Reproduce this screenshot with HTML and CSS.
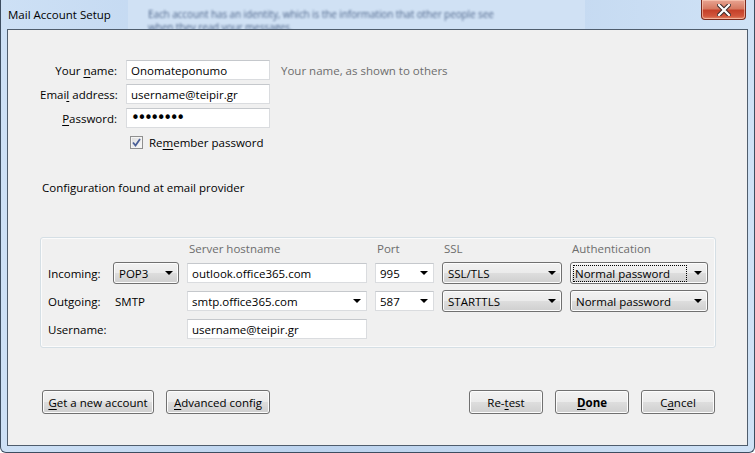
FILE: index.html
```html
<!DOCTYPE html>
<html lang="en">
<head>
    <meta charset="UTF-8">
    <title>Mail Account Setup</title>
    <link rel="stylesheet" href="styles.css">
</head>
<body>
    <div class="window">
        <div class="glass">
            <div class="glass-text">Each account has an identity, which is the information that other people see<br>when they read your messages.</div>
        </div>
        <div class="titlebar">
            <span class="title">Mail Account Setup</span>
            <div class="close-btn">
                <svg width="14" height="12" viewBox="0 0 14 12">
                    <path d="M2 1 L12 11 M12 1 L2 11" stroke="#3a2a2a" stroke-width="4.2" stroke-linecap="square"/>
                    <path d="M2 1 L12 11 M12 1 L2 11" stroke="#ffffff" stroke-width="2.2" stroke-linecap="square"/>
                </svg>
            </div>
        </div>

        <div class="client">
            <div class="identity">
                <span class="lbl">Your <u>n</u>ame:</span>
                <input class="text" type="text" value="Onomateponumo">
                <span class="hint">Your name, as shown to others</span>

                <span class="lbl">Emai<u>l</u> address:</span>
                <input class="text" type="text" value="username@teipir.gr">
                <span></span>

                <span class="lbl"><u>P</u>assword:</span>
                <input class="text pass" type="password" value="12345678">
                <span></span>

                <span></span>
                <div class="check-row">
                    <span class="checkbox">
                        <svg width="9" height="9" viewBox="0 0 9 9">
                            <path d="M1 4.5 L3.5 7.5 L8 1" fill="none" stroke="#4a5f97" stroke-width="1.8"/>
                        </svg>
                    </span>
                    <span>Re<u>m</u>ember password</span>
                </div>
                <span></span>
            </div>

            <p class="status">Configuration found at email provider</p>

            <div class="servers">
                <span></span>
                <span></span>
                <span class="col-head">Server hostname</span>
                <span class="col-head">Port</span>
                <span class="col-head">SSL</span>
                <span class="col-head">Authentication</span>

                <span class="row-lbl">Incoming:</span>
                <div class="dropdown"><span>POP3</span><span class="arrow"></span></div>
                <input class="text" type="text" value="outlook.office365.com">
                <div class="combo"><span>995</span><span class="arrow"></span></div>
                <div class="dropdown"><span>SSL/TLS</span><span class="arrow"></span></div>
                <div class="dropdown"><span class="focused">Normal password</span><span class="arrow"></span></div>

                <span class="row-lbl">Outgoing:</span>
                <span class="row-lbl smtp">SMTP</span>
                <div class="combo"><span>smtp.office365.com</span><span class="arrow"></span></div>
                <div class="combo"><span>587</span><span class="arrow"></span></div>
                <div class="dropdown"><span>STARTTLS</span><span class="arrow"></span></div>
                <div class="dropdown"><span>Normal password</span><span class="arrow"></span></div>

                <span class="row-lbl">Username:</span>
                <span></span>
                <input class="text" type="text" value="username@teipir.gr">
            </div>

            <div class="actions">
                <div class="btn-group">
                    <button class="btn wide"><u>G</u>et a new account</button>
                    <button class="btn mid"><u>A</u>dvanced config</button>
                </div>
                <div class="btn-group">
                    <button class="btn">Re-<u>t</u>est</button>
                    <button class="btn default"><u>D</u>one</button>
                    <button class="btn">C<u>a</u>ncel</button>
                </div>
            </div>
        </div>
    </div>
</body>
</html>
```

FILE: styles.css
```css
body {
    margin: 0;
    width: 755px;
    height: 453px;
    overflow: hidden;
    font-family: "Open Sans", "Noto Sans", sans-serif;
    font-size: 11.5px;
    color: #000;
}

u {
    text-decoration: underline;
    text-underline-offset: 2px;
}

.window {
    position: relative;
    box-sizing: border-box;
    width: 755px;
    height: 453px;
    display: flex;
    flex-direction: column;
    background: linear-gradient(90deg, #cde0f5 0%, #bcd3ee 40%, #c3d8f0 70%, #cfe2f6 100%);
    border: 1px solid #3d4d60;
    border-top: none;
    border-radius: 0 0 6px 6px;
}

/* blurred window behind the aero glass */
.glass {
    position: absolute;
    left: 127px;
    top: 0;
    width: 457px;
    height: 29px;
    background: #d0e1f4;
    overflow: hidden;
}

.glass-text {
    position: absolute;
    left: 20px;
    top: 8px;
    font-size: 10px;
    line-height: 13px;
    letter-spacing: -0.1px;
    color: #1e3864;
    white-space: nowrap;
    filter: blur(1.2px);
    opacity: 0.75;
}

.titlebar {
    position: relative;
    height: 29px;
    display: flex;
    justify-content: space-between;
    align-items: flex-start;
    padding: 0 8px 0 7px;
}

.title {
    align-self: center;
    line-height: 16px;
    margin-top: 1px;
}

.close-btn {
    width: 45px;
    height: 20px;
    box-sizing: border-box;
    display: flex;
    align-items: center;
    justify-content: center;
    border: 1px solid #7a2a1d;
    border-top: none;
    border-radius: 0 0 4px 4px;
    background: linear-gradient(#e8a492 0%, #d67a62 45%, #c5412a 55%, #d2563c 85%, #e28a6c 100%);
    box-shadow: inset 0 0 0 1px rgba(255, 210, 190, 0.6);
}

.client {
    position: relative;
    flex: 1;
    margin: 0 6px 6px 6px;
    border: 1px solid #4f5d6d;
    background: #f0f0f0;
    padding: 30px 31px 0 32px;
    display: flex;
    flex-direction: column;
}

.identity {
    display: grid;
    grid-template-columns: 77px 144px 1fr;
    grid-auto-rows: 20px;
    column-gap: 9px;
    row-gap: 4px;
    align-items: center;
}

.lbl {
    text-align: right;
    white-space: nowrap;
}

.hint {
    color: #6d6d6d;
    padding-left: 2px;
    white-space: nowrap;
}

.text {
    box-sizing: border-box;
    height: 20px;
    width: 100%;
    margin: 0;
    padding: 0 4px;
    border: 1px solid #dadcdf;
    border-top-color: #c5c8cc;
    border-radius: 0;
    background: #fff;
    font-family: inherit;
    font-size: 11.5px;
    color: #000;
    outline: none;
}

.pass {
    font-family: "DejaVu Sans", sans-serif;
    font-size: 15px;
    letter-spacing: -2.4px;
}

.check-row {
    display: flex;
    align-items: center;
    gap: 6px;
    margin-left: 4px;
    white-space: nowrap;
}

.checkbox {
    box-sizing: border-box;
    width: 13px;
    height: 13px;
    display: flex;
    align-items: center;
    justify-content: center;
    border: 1px solid #8f8f8f;
    background: linear-gradient(135deg, #dcdcdc, #fafafa);
    box-shadow: inset 0 0 0 1px #f4f4f4;
}

.status {
    margin: 28px 0 0 2px;
    line-height: 16px;
}

.servers {
    margin-top: 41px;
    display: grid;
    grid-template-columns: 57px 66px 180px 59px 120px 138px;
    grid-template-rows: 14px 22px 22px 22px;
    column-gap: 8px;
    row-gap: 6px;
    align-items: center;
    padding: 4px 6px 7px 7px;
    border: 1px solid #d5dfe5;
    border-radius: 3px;
    box-shadow: inset 0 0 0 1px #fbfbfb;
}

.row-lbl {
    white-space: nowrap;
}

.col-head {
    color: #6d6d6d;
    padding-left: 2px;
    line-height: 16px;
    white-space: nowrap;
}

.smtp {
    padding-left: 2px;
}

.dropdown,
.combo {
    box-sizing: border-box;
    height: 22px;
    display: flex;
    align-items: center;
    justify-content: space-between;
    padding: 0 5px 0 5px;
    white-space: nowrap;
}

.dropdown {
    border: 1px solid #707070;
    border-radius: 3px;
    background: linear-gradient(#f2f2f2 0%, #ebebeb 48%, #dddddd 52%, #cfcfcf 100%);
    box-shadow: inset 0 0 0 1px #fcfcfc;
}

.combo {
    height: 20px;
    padding-left: 4px;
    background: #fff;
    border: 1px solid #dadcdf;
    border-top-color: #c5c8cc;
}

.arrow {
    width: 0;
    height: 0;
    border-left: 4px solid transparent;
    border-right: 4px solid transparent;
    border-top: 4px solid #000;
}

.focused {
    flex: 1;
    margin: 0 8px 0 -2px;
    padding: 0 1px;
    line-height: 15px;
    outline: 1px dotted #000;
}

.actions {
    margin-top: 42px;
    display: flex;
    justify-content: space-between;
    padding: 0 1px 0 2px;
}

.btn-group {
    display: flex;
    gap: 12px;
}

.btn {
    box-sizing: border-box;
    width: 74px;
    height: 24px;
    padding: 0;
    border: 1px solid #707070;
    border-radius: 3px;
    background: linear-gradient(#f2f2f2 0%, #ebebeb 48%, #dddddd 52%, #cfcfcf 100%);
    box-shadow: inset 0 0 0 1px #fcfcfc;
    font-family: inherit;
    font-size: 11.5px;
    color: #000;
}

.btn.wide {
    width: 112px;
}

.btn.mid {
    width: 104px;
}

.default {
    font-weight: bold;
}
```
